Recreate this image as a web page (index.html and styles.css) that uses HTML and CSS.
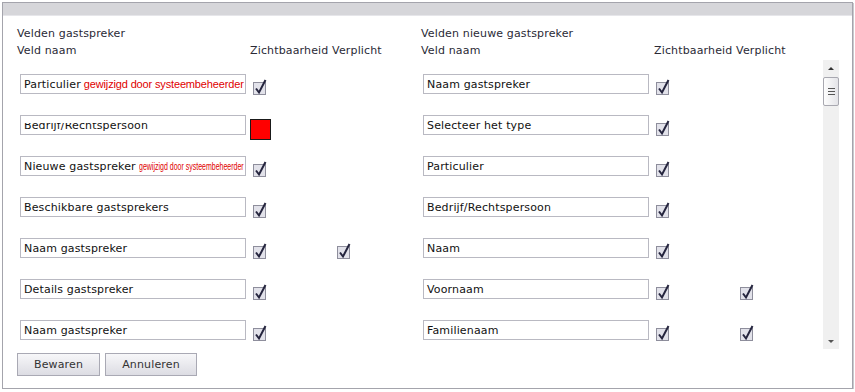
FILE: index.html
```html
<!DOCTYPE html>
<html>
<head>
<meta charset="utf-8">
<link rel="stylesheet" href="styles.css">
</head>
<body>
<div class="dialog">
  <div class="titlebar"></div>
  <div class="content">
    <div class="heads">
      <div class="head">
        <div class="title">Velden gastspreker</div>
        <div class="cols"><span>Veld naam</span><span>Zichtbaarheid Verplicht</span></div>
      </div>
      <div class="head">
        <div class="title">Velden nieuwe gastspreker</div>
        <div class="cols"><span>Veld naam</span><span>Zichtbaarheid Verplicht</span></div>
      </div>
    </div>
    <div class="scroll">
      <div class="scroll-content">
        <div class="panel">
          <div class="row"><div class="field">Particulier<span class="changed">gewijzigd door systeembeheerder</span></div><div class="cb"><svg width="14" height="16" viewBox="0 0 14 16"><rect x="0.5" y="3.5" width="12" height="12" class="box"/><path d="M3 9.5 L6 13.5 L12.5 1" class="tick"/></svg></div></div>
          <div class="row"><div class="field">Bedrijf/Rechtspersoon<div class="mask"></div></div><div class="cb"><div class="red-square"></div></div></div>
          <div class="row"><div class="field">Nieuwe gastspreker<span class="changed small">gewijzigd door systeembeheerder</span></div><div class="cb"><svg width="14" height="16" viewBox="0 0 14 16"><rect x="0.5" y="3.5" width="12" height="12" class="box"/><path d="M3 9.5 L6 13.5 L12.5 1" class="tick"/></svg></div></div>
          <div class="row"><div class="field">Beschikbare gastsprekers</div><div class="cb"><svg width="14" height="16" viewBox="0 0 14 16"><rect x="0.5" y="3.5" width="12" height="12" class="box"/><path d="M3 9.5 L6 13.5 L12.5 1" class="tick"/></svg></div></div>
          <div class="row"><div class="field">Naam gastspreker</div><div class="cb"><svg width="14" height="16" viewBox="0 0 14 16"><rect x="0.5" y="3.5" width="12" height="12" class="box"/><path d="M3 9.5 L6 13.5 L12.5 1" class="tick"/></svg></div><div class="cb"><svg width="14" height="16" viewBox="0 0 14 16"><rect x="0.5" y="3.5" width="12" height="12" class="box"/><path d="M3 9.5 L6 13.5 L12.5 1" class="tick"/></svg></div></div>
          <div class="row"><div class="field">Details gastspreker</div><div class="cb"><svg width="14" height="16" viewBox="0 0 14 16"><rect x="0.5" y="3.5" width="12" height="12" class="box"/><path d="M3 9.5 L6 13.5 L12.5 1" class="tick"/></svg></div></div>
          <div class="row"><div class="field">Naam gastspreker</div><div class="cb"><svg width="14" height="16" viewBox="0 0 14 16"><rect x="0.5" y="3.5" width="12" height="12" class="box"/><path d="M3 9.5 L6 13.5 L12.5 1" class="tick"/></svg></div></div>
        </div>
        <div class="panel">
          <div class="row"><div class="field">Naam gastspreker</div><div class="cb"><svg width="14" height="16" viewBox="0 0 14 16"><rect x="0.5" y="3.5" width="12" height="12" class="box"/><path d="M3 9.5 L6 13.5 L12.5 1" class="tick"/></svg></div></div>
          <div class="row"><div class="field">Selecteer het type</div><div class="cb"><svg width="14" height="16" viewBox="0 0 14 16"><rect x="0.5" y="3.5" width="12" height="12" class="box"/><path d="M3 9.5 L6 13.5 L12.5 1" class="tick"/></svg></div></div>
          <div class="row"><div class="field">Particulier</div><div class="cb"><svg width="14" height="16" viewBox="0 0 14 16"><rect x="0.5" y="3.5" width="12" height="12" class="box"/><path d="M3 9.5 L6 13.5 L12.5 1" class="tick"/></svg></div></div>
          <div class="row"><div class="field">Bedrijf/Rechtspersoon</div><div class="cb"><svg width="14" height="16" viewBox="0 0 14 16"><rect x="0.5" y="3.5" width="12" height="12" class="box"/><path d="M3 9.5 L6 13.5 L12.5 1" class="tick"/></svg></div></div>
          <div class="row"><div class="field">Naam</div><div class="cb"><svg width="14" height="16" viewBox="0 0 14 16"><rect x="0.5" y="3.5" width="12" height="12" class="box"/><path d="M3 9.5 L6 13.5 L12.5 1" class="tick"/></svg></div></div>
          <div class="row"><div class="field">Voornaam</div><div class="cb"><svg width="14" height="16" viewBox="0 0 14 16"><rect x="0.5" y="3.5" width="12" height="12" class="box"/><path d="M3 9.5 L6 13.5 L12.5 1" class="tick"/></svg></div><div class="cb"><svg width="14" height="16" viewBox="0 0 14 16"><rect x="0.5" y="3.5" width="12" height="12" class="box"/><path d="M3 9.5 L6 13.5 L12.5 1" class="tick"/></svg></div></div>
          <div class="row"><div class="field">Familienaam</div><div class="cb"><svg width="14" height="16" viewBox="0 0 14 16"><rect x="0.5" y="3.5" width="12" height="12" class="box"/><path d="M3 9.5 L6 13.5 L12.5 1" class="tick"/></svg></div><div class="cb"><svg width="14" height="16" viewBox="0 0 14 16"><rect x="0.5" y="3.5" width="12" height="12" class="box"/><path d="M3 9.5 L6 13.5 L12.5 1" class="tick"/></svg></div></div>
        </div>
      </div>
      <div class="scrollbar">
        <div class="arrow"><span class="tri-up"></span></div>
        <div class="thumb"><span></span><span></span><span></span></div>
        <div class="track"></div>
        <div class="arrow"><span class="tri-down"></span></div>
      </div>
    </div>
    <div class="buttons">
      <button class="btn save">Bewaren</button>
      <button class="btn cancel">Annuleren</button>
    </div>
  </div>
</div>
</body>
</html>
```
FILE: styles.css
```css
html, body {
  margin: 0;
  padding: 0;
  background: #ffffff;
}
body {
  font-family: "DejaVu Sans", Verdana, sans-serif;
  font-size: 11px;
  letter-spacing: 0.15px;
  color: #222;
}
.dialog {
  box-sizing: border-box;
  margin: 2px 0 0 2px;
  width: 851px;
  height: 387px;
  border: 1px solid #a4a4ac;
  box-shadow: 1px 1px 0 #c9c9ce;
  background: #fff;
  display: flex;
  flex-direction: column;
}
.titlebar {
  height: 12px;
  background: #d6d6da;
  border-bottom: 1px solid #e6e6ea;
}
.content {
  padding: 9px 0 0 14px;
  display: flex;
  flex-direction: column;
}
.heads {
  display: grid;
  grid-template-columns: 404px 404px;
  line-height: 17px;
  color: #2a2a36;
}
.head .cols {
  display: grid;
  grid-template-columns: 233px auto;
}
.scroll {
  margin-top: 1px;
  height: 289px;
  width: 822px;
  display: flex;
  overflow: hidden;
}
.scroll-content {
  flex: 1;
  display: grid;
  grid-template-columns: 403px 1fr;
  padding: 14px 0 0 3px;
  overflow: hidden;
}
.panel {
  display: flex;
  flex-direction: column;
  gap: 21px;
}
.row {
  display: grid;
  grid-template-columns: 233px 84px 14px;
  height: 20px;
}
.field {
  position: relative;
  box-sizing: border-box;
  width: 226px;
  height: 20px;
  border: 1px solid #b9b9c2;
  background: #fff;
  padding: 0 0 0 3px;
  line-height: 19px;
  white-space: nowrap;
  overflow: hidden;
  color: #111;
}
.changed {
  font-family: "Liberation Sans", Arial, sans-serif;
  color: #e00000;
  margin-left: 3px;
  letter-spacing: -0.15px;
}
.changed.small {
  display: inline-block;
  font-size: 10px;
  letter-spacing: 0;
  transform: scaleX(0.7);
  transform-origin: left center;
}
.mask {
  position: absolute;
  left: 3px;
  top: -1px;
  width: 110px;
  height: 8px;
  background: #fff;
}
.cb {
  align-self: end;
  margin-bottom: -1px;
  line-height: 0;
}
.cb svg .box {
  fill: #e2e2ea;
  stroke: #8e8e9c;
  stroke-width: 1;
}
.cb svg .tick {
  fill: none;
  stroke: #25253e;
  stroke-width: 2;
  stroke-linejoin: miter;
}
.red-square {
  box-sizing: border-box;
  width: 21px;
  height: 21px;
  margin: 0 0 -4px -3px;
  background: #ff0000;
  border: 1px solid #1a1a1a;
}
.scrollbar {
  width: 16px;
  background: #f0f0f0;
  display: flex;
  flex-direction: column;
}
.arrow {
  height: 16px;
  display: flex;
  align-items: center;
  justify-content: center;
}
.tri-up {
  width: 0;
  height: 0;
  border-left: 3px solid transparent;
  border-right: 3px solid transparent;
  border-bottom: 3px solid #333;
}
.tri-down {
  width: 0;
  height: 0;
  border-left: 3px solid transparent;
  border-right: 3px solid transparent;
  border-top: 3px solid #555;
}
.thumb {
  box-sizing: border-box;
  margin-top: 1px;
  height: 29px;
  border: 1px solid #a8a8b0;
  border-radius: 2px;
  background: linear-gradient(to right, #fdfdfd, #e4e4e8);
  display: flex;
  flex-direction: column;
  align-items: center;
  justify-content: center;
  gap: 2px;
}
.thumb span {
  width: 7px;
  height: 1px;
  background: #555;
}
.track {
  flex: 1;
}
.buttons {
  margin-top: 4px;
  display: flex;
  gap: 5px;
}
.btn {
  box-sizing: border-box;
  height: 23px;
  border: 1px solid #a9a9b4;
  background: linear-gradient(#f7f7f9, #dcdce3);
  font-family: "DejaVu Sans", Verdana, sans-serif;
  font-size: 11px;
  letter-spacing: 0.15px;
  color: #333;
  padding: 0;
  border-radius: 0;
}
.btn.save { width: 83px; }
.btn.cancel { width: 92px; }
```
